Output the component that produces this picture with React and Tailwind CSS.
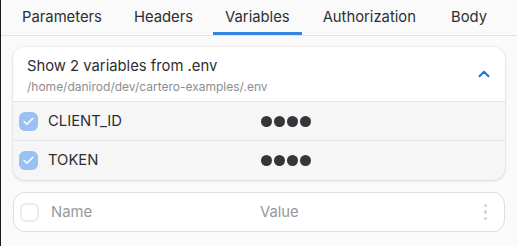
import React from 'react';
import { Check, ChevronUp } from 'lucide-react';

const tabs = ['Parameters', 'Headers', 'Variables', 'Authorization', 'Body'];

const vars = [
    { name: 'CLIENT_ID' },
    { name: 'TOKEN' },
];

const Dots = () => (
    <div className="flex items-center gap-[2px]">
        {[0, 1, 2, 3].map((i) => (
            <span key={i} className="block w-[11px] h-[11px] rounded-full bg-[#36363a]" />
        ))}
    </div>
);

const Kebab = () => (
    <div className="flex flex-col items-center gap-[3px]">
        {[0, 1, 2].map((i) => (
            <span key={i} className="block w-[3.5px] h-[3.5px] rounded-full bg-[#d4d4d4]" />
        ))}
    </div>
);

const App = () => {
    return (
        <div
            className="w-[517px] h-[246px] overflow-hidden bg-[#fafafa] border-l border-[#1a1a1a] text-[#2e2e32]"
            style={{ fontFamily: 'Inter, "Noto Sans", sans-serif' }}
        >
            <div className="flex items-end h-[36px] pl-[9px] gap-[8px] border-b border-[#e2e2e2]">
                {tabs.map((t) => (
                    <div
                        key={t}
                        className={`h-full pt-[2px] flex items-center justify-center text-[14.8px] border-b-[3px] ${t === 'Authorization' ? 'px-[13px]' : 'px-3'} ${t === 'Body' ? 'ml-[2px]' : ''} ${t === 'Variables' ? 'border-[#3584e4]' : 'border-transparent'}`}
                    >
                        {t}
                    </div>
                ))}
            </div>

            <div className="px-3 pt-[11px]">
                <div className="rounded-xl bg-[#f6f6f6] shadow-[0_1px_3px_rgba(0,0,0,0.12),0_0_0_1px_rgba(0,0,0,0.03)] overflow-hidden">
                    <div className="h-[55px] bg-white flex items-center pl-[14px] pr-[12px] pt-[2px] border-b border-[#e6e6e6]">
                        <div className="flex-1 flex flex-col">
                            <span className="text-[14.8px] leading-[20px] text-[#2e2e32]">Show 2 variables from .env</span>
                            <span className="mt-[2px] text-[12px] leading-[17px] text-[#8d8d90]">/home/danirod/dev/cartero-examples/.env</span>
                        </div>
                        <ChevronUp size={18} strokeWidth={2.6} className="text-[#1c71d8] -mt-[2px]" />
                    </div>
                    {vars.map((v, i) => (
                        <div
                            key={v.name}
                            className={`h-[39px] flex items-center pl-[6px] ${i === 0 ? 'border-b border-[#e4e4e4]' : ''}`}
                        >
                            <div className="w-[19px] h-[19px] rounded-[6px] bg-[#99c1f1] flex items-center justify-center">
                                <Check size={13} strokeWidth={3} className="text-white" />
                            </div>
                            <span className="w-[223px] pl-[10px] text-[14.8px]">{v.name}</span>
                            <Dots />
                        </div>
                    ))}
                </div>

                <div className="mt-[12px] h-[40px] rounded-xl bg-white border border-[#dedede] flex items-center pl-[6px] pr-[17px]">
                    <div className="w-[19px] h-[19px] rounded-[6px] border-2 border-[#ececec] bg-white" />
                    <span className="w-[221px] pl-[12px] text-[14.8px] text-[#98989a]">Name</span>
                    <span className="flex-1 text-[14.8px] text-[#98989a]">Value</span>
                    <Kebab />
                </div>
            </div>
        </div>
    );
};

export default App;
